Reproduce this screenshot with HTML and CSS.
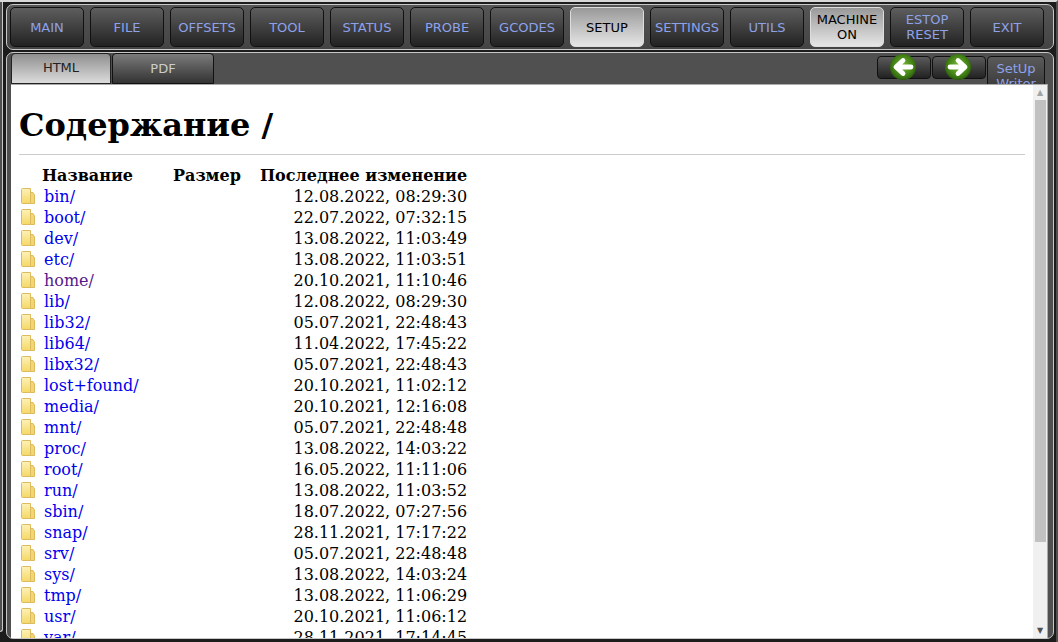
FILE: index.html
```html
<!DOCTYPE html>
<html lang="ru">
<head>
<meta charset="utf-8">
<title>Setup</title>
<link rel="stylesheet" href="styles.css">
</head>
<body>
<svg class="defs" width="0" height="0">
  <defs>
    <linearGradient id="fg" x1="0" x2="0" y1="0" y2="1"><stop offset="0" stop-color="#fdf1b8"/><stop offset="1" stop-color="#f5d868"/></linearGradient>
    <radialGradient id="ball" cx="0.5" cy="0.45" r="0.55"><stop offset="0" stop-color="#7cbc38"/><stop offset="0.75" stop-color="#3f7d14"/><stop offset="1" stop-color="#2a5c0c"/></radialGradient>
    <symbol id="folder" viewBox="0 0 14 16">
      <path d="M9.5 4.5 H12 L13.5 7 V15.5 H9.5 Z" fill="#f3d673" stroke="#dcbb5e"/>
      <path d="M1.5 0.5 H9.5 V15.5 H1.5 Q0.5 15.5 0.5 14.5 V1.5 Q0.5 0.5 1.5 0.5 Z" fill="url(#fg)" stroke="#dcbb5e"/>
    </symbol>
  </defs>
</svg>
<div class="app">
  <div class="side"></div>
  <div class="content">
  <nav class="topbar">
    <button class="btn">MAIN</button><button class="btn">FILE</button><button class="btn">OFFSETS</button><button class="btn">TOOL</button><button class="btn">STATUS</button><button class="btn">PROBE</button><button class="btn">GCODES</button><button class="btn on">SETUP</button><button class="btn">SETTINGS</button><button class="btn">UTILS</button><button class="btn on">MACHINE<br>ON</button><button class="btn">ESTOP<br>RESET</button><button class="btn">EXIT</button>
  </nav>
  <section class="panel">
    <div class="tabs">
      <button class="tab tab-on">HTML</button>
      <button class="tab tab-off">PDF</button>
      <div class="spacer"></div>
      <button class="nav-btn"><svg class="arrow" viewBox="0 0 28 28"><circle cx="14" cy="14" r="13" fill="url(#ball)"/><path d="M14 7.5 L7 14 L14 20.5 M8 14 H22" fill="none" stroke="#fff" stroke-width="4.8" stroke-linejoin="round" stroke-linecap="round"/></svg></button>
      <button class="nav-btn"><svg class="arrow" viewBox="0 0 28 28"><circle cx="14" cy="14" r="13" fill="url(#ball)"/><path d="M14 7.5 L21 14 L14 20.5 M20 14 H6" fill="none" stroke="#fff" stroke-width="4.8" stroke-linejoin="round" stroke-linecap="round"/></svg></button>
      <button class="writer">SetUp<br>Writer</button>
    </div>
    <div class="view">
      <main class="doc">
        <h1>Содержание /</h1>
        <hr>
        <table>
          <thead><tr><th class="c-name">Название</th><th class="c-size">Размер</th><th class="c-date">Последнее изменение</th></tr></thead>
          <tbody>
            <tr><td class="name"><svg class="ico"><use href="#folder"/></svg><a href="#">bin/</a></td><td></td><td class="date">12.08.2022, 08:29:30</td></tr>
            <tr><td class="name"><svg class="ico"><use href="#folder"/></svg><a href="#">boot/</a></td><td></td><td class="date">22.07.2022, 07:32:15</td></tr>
            <tr><td class="name"><svg class="ico"><use href="#folder"/></svg><a href="#">dev/</a></td><td></td><td class="date">13.08.2022, 11:03:49</td></tr>
            <tr><td class="name"><svg class="ico"><use href="#folder"/></svg><a href="#">etc/</a></td><td></td><td class="date">13.08.2022, 11:03:51</td></tr>
            <tr><td class="name"><svg class="ico"><use href="#folder"/></svg><a href="#" class="seen">home/</a></td><td></td><td class="date">20.10.2021, 11:10:46</td></tr>
            <tr><td class="name"><svg class="ico"><use href="#folder"/></svg><a href="#">lib/</a></td><td></td><td class="date">12.08.2022, 08:29:30</td></tr>
            <tr><td class="name"><svg class="ico"><use href="#folder"/></svg><a href="#">lib32/</a></td><td></td><td class="date">05.07.2021, 22:48:43</td></tr>
            <tr><td class="name"><svg class="ico"><use href="#folder"/></svg><a href="#">lib64/</a></td><td></td><td class="date">11.04.2022, 17:45:22</td></tr>
            <tr><td class="name"><svg class="ico"><use href="#folder"/></svg><a href="#">libx32/</a></td><td></td><td class="date">05.07.2021, 22:48:43</td></tr>
            <tr><td class="name"><svg class="ico"><use href="#folder"/></svg><a href="#">lost+found/</a></td><td></td><td class="date">20.10.2021, 11:02:12</td></tr>
            <tr><td class="name"><svg class="ico"><use href="#folder"/></svg><a href="#">media/</a></td><td></td><td class="date">20.10.2021, 12:16:08</td></tr>
            <tr><td class="name"><svg class="ico"><use href="#folder"/></svg><a href="#">mnt/</a></td><td></td><td class="date">05.07.2021, 22:48:48</td></tr>
            <tr><td class="name"><svg class="ico"><use href="#folder"/></svg><a href="#">proc/</a></td><td></td><td class="date">13.08.2022, 14:03:22</td></tr>
            <tr><td class="name"><svg class="ico"><use href="#folder"/></svg><a href="#">root/</a></td><td></td><td class="date">16.05.2022, 11:11:06</td></tr>
            <tr><td class="name"><svg class="ico"><use href="#folder"/></svg><a href="#">run/</a></td><td></td><td class="date">13.08.2022, 11:03:52</td></tr>
            <tr><td class="name"><svg class="ico"><use href="#folder"/></svg><a href="#">sbin/</a></td><td></td><td class="date">18.07.2022, 07:27:56</td></tr>
            <tr><td class="name"><svg class="ico"><use href="#folder"/></svg><a href="#">snap/</a></td><td></td><td class="date">28.11.2021, 17:17:22</td></tr>
            <tr><td class="name"><svg class="ico"><use href="#folder"/></svg><a href="#">srv/</a></td><td></td><td class="date">05.07.2021, 22:48:48</td></tr>
            <tr><td class="name"><svg class="ico"><use href="#folder"/></svg><a href="#">sys/</a></td><td></td><td class="date">13.08.2022, 14:03:24</td></tr>
            <tr><td class="name"><svg class="ico"><use href="#folder"/></svg><a href="#">tmp/</a></td><td></td><td class="date">13.08.2022, 11:06:29</td></tr>
            <tr><td class="name"><svg class="ico"><use href="#folder"/></svg><a href="#">usr/</a></td><td></td><td class="date">20.10.2021, 11:06:12</td></tr>
            <tr><td class="name"><svg class="ico"><use href="#folder"/></svg><a href="#">var/</a></td><td></td><td class="date">28.11.2021, 17:14:45</td></tr>
          </tbody>
        </table>
      </main>
      <div class="scrollbar">
        <div class="arr arr-up">▲</div>
        <div class="track"><div class="thumb"></div></div>
        <div class="arr">▼</div>
      </div>
    </div>
  </section>
  </div>
</div>
</body>
</html>
```
FILE: styles.css
```css
html, body { margin: 0; height: 100%; overflow: hidden; }
body { background: #1c1c1c; font-family: "DejaVu Sans", sans-serif; }
.defs { position: absolute; }
.app { height: 642px; width: 1058px; box-sizing: border-box; display: flex; background: #1c1c1c; border-top: 2px solid #d8d8d8; border-right: 2px solid #505050; }
.side { width: 2px; flex: none; height: 629px; background: #505050; border-right: 1px solid #c8c8c8; border-bottom: 1px solid #c8c8c8; border-bottom-right-radius: 3px; }
.content { flex: 1; min-width: 0; margin-left: 3px; padding: 2px 2px 3px 0; display: flex; flex-direction: column; gap: 2px; }
.topbar { height: 46px; flex: none; box-sizing: border-box; border: 1px solid #c8c8c8; border-radius: 7px; background: linear-gradient(#555, #444); display: flex; gap: 6px; padding: 2px 3px; }
.btn { width: 74px; flex: none; height: 40px; padding: 0; border: 1px solid #111; border-radius: 5px; background: linear-gradient(#5e5e5e, #222); color: #8ea2ea; font: 13px/15px "DejaVu Sans", sans-serif; }
.btn.on { background: linear-gradient(#999, #e6e6e6); color: #000; border-color: #ddd; }
.panel { flex: 1; min-height: 0; box-sizing: border-box; border: 1px solid #c8c8c8; border-bottom-width: 1px; border-radius: 7px; background: #505050; display: flex; flex-direction: column; padding: 0 5px 0 4px; }
.tabs { display: flex; height: 31px; flex: none; }
.tab { width: 101px; height: 31px; padding: 0; margin-right: 0; border: 1px solid #111; border-radius: 4px 4px 0 0; background: linear-gradient(#7a7a7a, #333); color: #ccc; font: 13px "DejaVu Sans", sans-serif; }
.tab-on { width: 100px; margin-right: 1px; background: linear-gradient(#8f8f8f, #dcdcdc); color: #222; border-color: #222; padding-bottom: 2px; }
.tab-off { width: 102px; }
.spacer { flex: 1; }
.nav-btn { width: 54px; height: 23px; margin: 3px 1px 0 0; padding: 0; border: 1px solid #111; border-radius: 4px; background: linear-gradient(#5a5a5a, #222); position: relative; overflow: visible; flex: none; }
.arrow { position: absolute; left: 11px; top: -4px; width: 28px; height: 28px; }
.writer { width: 58px; height: 40px; margin: 3px 3px 0 0; padding: 0 0 1px; border: 1px solid #111; border-radius: 4px; background: linear-gradient(#5a5a5a, #333); color: #8ea2ea; font: 13px/15px "DejaVu Sans", sans-serif; align-self: flex-start; overflow: hidden; flex: none; }
.view { flex: 1; min-height: 0; position: relative; z-index: 1; background: #fff; display: flex; border-top: 1px solid #aaa; border-right: 1px solid #aaa; overflow: hidden; }
.doc { flex: 1; min-width: 0; padding: 8px; font: 16px/21px "DejaVu Serif", serif; color: #000; overflow: hidden; }
h1 { font-size: 32px; line-height: 38px; margin: 13px 0 10px; }
hr { margin: 0; border: 0; border-top: 1px solid #ccc; height: 0; }
table { border-collapse: collapse; margin-top: 10px; }
th, td { padding: 0; height: 21px; text-align: left; }
th { font-weight: bold; }
.c-name { padding-left: 23px; width: 131px; box-sizing: border-box; }
.c-size { width: 110px; box-sizing: border-box; padding-left: 23px; }
.date { text-align: right; }
.name { padding-left: 2px; }
.ico { width: 14px; height: 16px; margin-right: 9px; vertical-align: -2px; }
a { color: #0000ee; text-decoration: none; }
a.seen { color: #551a8b; }
.scrollbar { width: 14px; flex: none; background: #f0f0f0; display: flex; flex-direction: column; }
.arr { height: 15px; font-size: 8px; line-height: 15px; text-align: center; color: #505050; }
.arr-up { color: #a3a3a3; }
.track { flex: 1; }
.thumb { height: 442px; background: #c1c1c1; margin: 0 1px 0 2px; }
```
